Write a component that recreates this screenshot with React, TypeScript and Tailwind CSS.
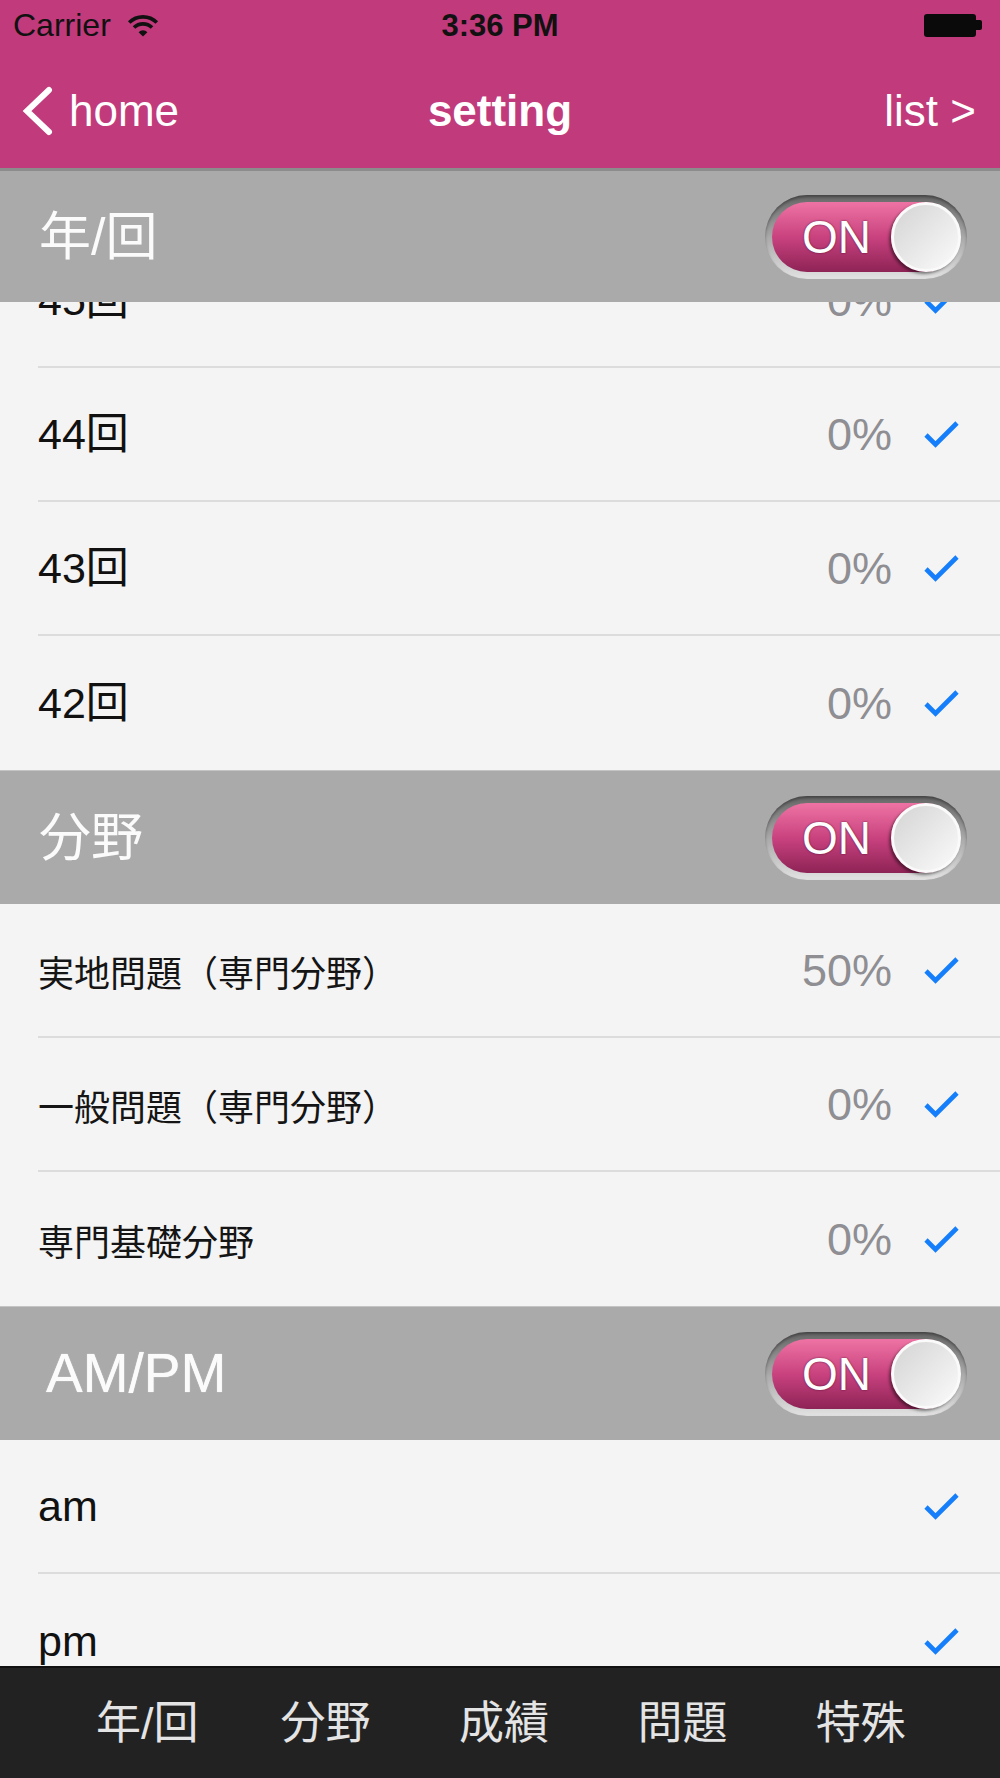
import React from "react";

const FONT = "font-['Liberation_Sans','Noto_Sans_CJK_JP',sans-serif]";

function Wifi() {
  return (
    <svg width="34" height="24" viewBox="0 0 34 24" className="ml-[15px]">
      <path d="M3.2 9.6 A19.5 19.5 0 0 1 30.8 9.6" fill="none" stroke="#111" strokeWidth="3.6" />
      <path d="M8 14.6 A12.7 12.7 0 0 1 26 14.6" fill="none" stroke="#111" strokeWidth="3.6" />
      <path d="M12.6 19.2 L17 23.6 L21.4 19.2 A6.2 6.2 0 0 0 12.6 19.2 Z" fill="#111" />
    </svg>
  );
}

function Battery() {
  return (
    <div className="flex items-center">
      <div className="w-[52px] h-[23px] bg-[#0a0a0a] rounded-[3px]" />
      <div className="w-[6px] h-[10px] bg-[#0a0a0a] rounded-r-[2px]" />
    </div>
  );
}

function Chevron() {
  return (
    <svg width="38" height="50" viewBox="0 0 38 50">
      <path d="M32 4 L10 25 L32 46" fill="none" stroke="#fff" strokeWidth="6" strokeLinecap="round" strokeLinejoin="miter" />
    </svg>
  );
}

function Check() {
  return (
    <svg width="37" height="28" viewBox="0 0 37 28" className="ml-[31px] shrink-0">
      <path d="M3 15 L12.5 24.5 L34 3" fill="none" stroke="#147efb" strokeWidth="4.6" strokeLinecap="butt" strokeLinejoin="miter" />
    </svg>
  );
}

function Toggle() {
  return (
    <div className="w-[202px] h-[84px] rounded-full bg-linear-to-b from-[#666666] via-[#a9a9a9] to-[#e2e2e2] p-[7px] shadow-[inset_0_2px_3px_rgba(0,0,0,0.35)]">
      <div className="h-full w-full rounded-full bg-linear-to-b from-[#ee73a4] via-[#c9427f] to-[#8e2356] flex items-center justify-between">
        <span className="pl-[30px] text-[46px] leading-none text-white [text-shadow:0_0_2px_rgba(60,0,30,0.8)]">ON</span>
        <div className="w-[70px] h-[70px] -mr-[1px] rounded-full border-[3px] border-[#fafafa] bg-linear-to-br from-[#d4d4d4] to-[#fbfbfb] shadow-[-2px_2px_3px_rgba(0,0,0,0.45)]" />
      </div>
    </div>
  );
}

function SectionHeader({ title, latin = false, top = false }: { title: string; latin?: boolean; top?: boolean }) {
  return (
    <div
      className={
        "h-[134px] bg-[#aaaaaa] flex items-center justify-between pr-[33px] " +
        (top ? "border-t-[3px] border-[#8c8c8c] " : "border-t border-[#c4c4c4] ") +
        (latin ? "pl-[46px]" : "pl-[39px]")
      }
    >
      <span className={latin ? "text-[55px] leading-none text-[#fbfbfb] [text-shadow:0_0_1px_#fff]" : "text-[52px] leading-none text-[#fbfbfb]"}>{title}</span>
      <Toggle />
    </div>
  );
}

function Row({ label, pct, small = false, last = false }: { label: string; pct?: string; small?: boolean; last?: boolean }) {
  return (
    <div className="h-[134px] pl-[38px] bg-[#f4f4f4]">
      <div className={"h-full flex items-center pr-[40px] " + (last ? "" : "border-b-2 border-[#dcdcdc]")}>
        <span className={small ? "flex-1 pt-[10px] text-[36px] leading-none text-[#151515]" : "flex-1 text-[43px] leading-none text-[#111]"}>
          {label}
        </span>
        {pct && <span className="text-[45px] leading-none text-[#8e8e93]">{pct}</span>}
        <Check />
      </div>
    </div>
  );
}

export default function App() {
  return (
    <div className={"w-[1000px] h-[1778px] flex flex-col overflow-hidden bg-[#f4f4f4] " + FONT}>
      <header className="bg-[#c13a7b] shrink-0">
        <div className="h-[50px] grid grid-cols-3 items-center">
          <div className="flex items-center pl-[13px]">
            <span className="text-[32px] leading-none text-[#111]">Carrier</span>
            <Wifi />
          </div>
          <div className="flex justify-center">
            <span className="text-[31px] leading-none font-bold text-[#111]">3:36 PM</span>
          </div>
          <div className="flex justify-end pr-[18px]">
            <Battery />
          </div>
        </div>
        <div className="h-[118px] pt-[4px] grid grid-cols-[1fr_auto_1fr] items-center">
          <div className="flex items-center pl-[17px]">
            <Chevron />
            <span className="ml-[14px] text-[44px] leading-none text-white">home</span>
          </div>
          <span className="text-[44px] leading-none font-bold text-white">setting</span>
          <div className="flex justify-end pr-[24px]">
            <span className="text-[44px] leading-none text-white">list &gt;</span>
          </div>
        </div>
      </header>

      <main className="flex-1 overflow-hidden">
        <SectionHeader title="年/回" top />
        <div className="h-[66px] overflow-hidden">
          <div className="-mt-[68px]">
            <Row label="45回" pct="0%" />
          </div>
        </div>
        <Row label="44回" pct="0%" />
        <Row label="43回" pct="0%" />
        <Row label="42回" pct="0%" last />

        <SectionHeader title="分野" />
        <Row label="実地問題（専門分野）" pct="50%" small />
        <Row label="一般問題（専門分野）" pct="0%" small />
        <Row label="専門基礎分野" pct="0%" small last />

        <SectionHeader title="AM/PM" latin />
        <Row label="am" />
        <Row label="pm" last />
      </main>

      <nav className="h-[112px] shrink-0 bg-[#222222] border-t-2 border-[#111] grid grid-cols-5 items-center pl-[58px] pr-[50px]">
        {["年/回", "分野", "成績", "問題", "特殊"].map((t) => (
          <span key={t} className="text-center text-[45px] leading-none text-[#e4e4e4]">
            {t}
          </span>
        ))}
      </nav>
    </div>
  );
}
